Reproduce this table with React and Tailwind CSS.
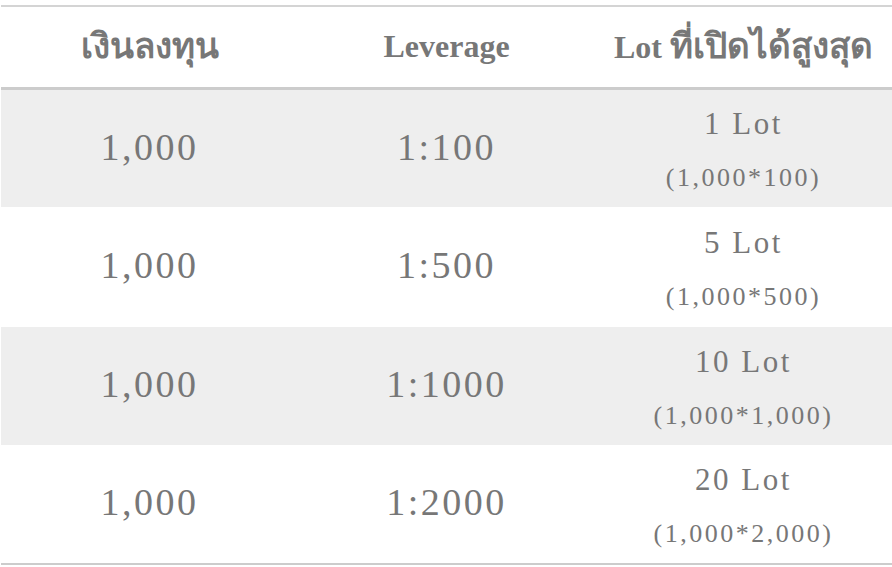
import React from "react";

const rows = [
  { amt: "1,000", lev: "1:100", lot: "1 Lot", sub: "(1,000*100)", bg: "bg-[#eeeeee]", h: "h-[117px]" },
  { amt: "1,000", lev: "1:500", lot: "5 Lot", sub: "(1,000*500)", bg: "bg-white", h: "h-[120px]" },
  { amt: "1,000", lev: "1:1000", lot: "10 Lot", sub: "(1,000*1,000)", bg: "bg-[#eeeeee]", h: "h-[118px]" },
  { amt: "1,000", lev: "1:2000", lot: "20 Lot", sub: "(1,000*2,000)", bg: "bg-white", h: "h-[118px]" },
];

export default function App() {
  return (
    <div
      className="w-[892px] h-[567px] bg-white pt-[5px] pl-[1px] text-[#777777]"
      style={{ fontFamily: '"Liberation Serif", "DejaVu Serif", serif' }}
    >
      <div className="border-t-2 border-[#d4d4d4]">
        <div className="grid grid-cols-3 h-[83px] items-center border-b-[3px] border-[#cccccc] font-bold text-[32px] text-center leading-none">
          <div className="pb-[2px] text-[35px]">เงินลงทุน</div>
          <div className="pb-[2px]">Leverage</div>
          <div className="pb-[2px]">
            Lot <span className="text-[35px]">ที่เปิดได้สูงสุด</span>
          </div>
        </div>
        {rows.map((r, i) => (
          <div key={i} className={`grid grid-cols-3 ${r.h} items-center text-center ${r.bg}`}>
            <div className="text-[38px] tracking-[2.5px] leading-none pb-[4px]">{r.amt}</div>
            <div className="text-[38px] tracking-[2.5px] leading-none pb-[4px]">{r.lev}</div>
            <div className="flex flex-col items-center gap-[26px] pt-[2px]">
              <div className="text-[31px] tracking-[2.5px] leading-none">{r.lot}</div>
              <div className="text-[26px] tracking-[2.5px] leading-none">{r.sub}</div>
            </div>
          </div>
        ))}
        <div className="border-t-2 border-[#cccccc]" />
      </div>
    </div>
  );
}
